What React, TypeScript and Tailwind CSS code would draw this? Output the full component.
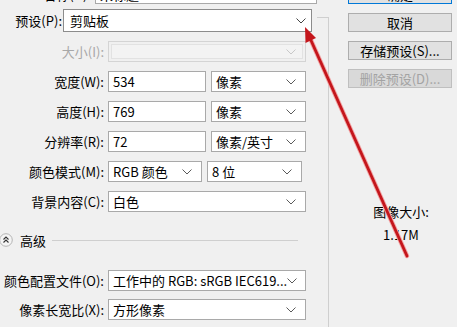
import React from 'react';

const font = { fontFamily: '"Noto Sans CJK SC", "Noto Sans", sans-serif' };

function Chevron({ color = '#5a5a5a' }: { color?: string }) {
    return (
        <svg width="10" height="6" viewBox="0 0 10 6" className="shrink-0">
            <path d="M0.5 0.5 L5 5 L9.5 0.5" fill="none" stroke={color} strokeWidth="1" />
        </svg>
    );
}

interface BoxProps {
    value?: string;
    width: string;
    select?: boolean;
    height?: string;
}

function Box({ value = '', width, select, height = 'h-[21px]' }: BoxProps) {
    return (
        <div className={`${width} ${height} shrink-0 flex items-center justify-between bg-white border border-[#a9a9a9] pl-[4px] pr-[9px]`}>
            <span className="text-[13px] leading-none text-black whitespace-nowrap">{value}</span>
            {select && <Chevron />}
        </div>
    );
}

function Row({ label, children, disabled }: { label: string; children: React.ReactNode; disabled?: boolean }) {
    return (
        <div className="flex items-center h-[21px] shrink-0">
            <div className={`w-[104px] text-right text-[13px] leading-none whitespace-nowrap ${disabled ? 'text-[#a8a8a8]' : 'text-black'}`}>
                {label}
            </div>
            <div className="flex items-center gap-[5px] ml-[4px]">{children}</div>
        </div>
    );
}

function Button({ label, disabled, primary }: { label: string; disabled?: boolean; primary?: boolean }) {
    return (
        <div
            className={`h-[19px] w-[104px] flex items-center justify-center text-[13px] leading-none border ${
                primary
                    ? 'border-[#0078d7] bg-[#e1e1e1] text-black'
                    : disabled
                    ? 'border-[#bfbfbf] bg-[#d9d9d9] text-[#a3a3a3]'
                    : 'border-[#adadad] bg-[#e1e1e1] text-black'
            }`}
        >
            {label}
        </div>
    );
}

export default function App() {
    return (
        <div className="relative w-[457px] h-[327px] overflow-hidden bg-[#f0f0f0] flex" style={font}>
            {/* Left form */}
            <div className="w-[317px] shrink-0 flex flex-col">
                {/* 名称 (cut off) */}
                <div className="flex items-center h-[20px] -mt-[16px] shrink-0">
                    <div className="w-[104px] text-right text-[13px] leading-none">名称(N):</div>
                    <div className="ml-[4px]">
                        <Box value="未标题-1" width="w-[222px]" height="h-[20px]" />
                    </div>
                </div>

                {/* 预设 */}
                <div className="flex items-center h-[23px] mt-[5px] shrink-0">
                    <div className="w-[62px] text-right text-[13px] leading-none">预设(P):</div>
                    <div className="ml-[1px] w-[249px] h-[23px] flex items-center justify-between bg-white border border-[#8c8c8c] pl-[6px] pr-[5px]">
                        <span className="text-[13px] leading-none">剪贴板</span>
                        <Chevron color="#444" />
                    </div>
                </div>

                <div className="flex flex-col gap-[9px] mt-[9px]">
                    <Row label="大小(I):" disabled>
                        <div className="w-[198px] h-[21px] border border-[#d4d4d4] p-[2px]">
                            <div className="w-full h-full border border-[#e2e2e2] bg-[#f3f3f3] flex items-center justify-end pr-[6px]">
                                <Chevron color="#c8c8c8" />
                            </div>
                        </div>
                    </Row>
                    <Row label="宽度(W):">
                        <Box value="534" width="w-[98px]" />
                        <Box value="像素" width="w-[95px]" select />
                    </Row>
                    <Row label="高度(H):">
                        <Box value="769" width="w-[98px]" />
                        <Box value="像素" width="w-[95px]" select />
                    </Row>
                    <Row label="分辨率(R):">
                        <Box value="72" width="w-[98px]" />
                        <Box value="像素/英寸" width="w-[95px]" select />
                    </Row>
                    <Row label="颜色模式(M):">
                        <Box value="RGB 颜色" width="w-[94px]" select />
                        <Box value="8 位" width="w-[95px]" select />
                    </Row>
                    <Row label="背景内容(C):">
                        <Box value="白色" width="w-[198px]" select />
                    </Row>
                </div>

                {/* 高级 */}
                <div className="flex items-center h-[16px] mt-[20px] -ml-[1px] shrink-0">
                    <svg width="14" height="14" viewBox="0 0 14 14" className="shrink-0">
                        <circle cx="7" cy="7" r="6.3" fill="#f4f4f4" stroke="#b4b4b4" />
                        <path d="M4.5 6.5 L7 4 L9.5 6.5 M4.5 9.5 L7 7 L9.5 9.5" fill="none" stroke="#333" strokeWidth="1.1" />
                    </svg>
                    <span className="ml-[7px] text-[13px] leading-none">高级</span>
                    <div className="ml-[6px] w-[246px] h-px bg-[#cfcfcf]" />
                </div>

                <div className="flex flex-col gap-[8px] mt-[22px]">
                    <Row label="颜色配置文件(O):">
                        <Box value="工作中的 RGB: sRGB IEC619..." width="w-[198px]" select />
                    </Row>
                    <Row label="像素长宽比(X):">
                        <Box value="方形像素" width="w-[198px]" select />
                    </Row>
                </div>
            </div>

            {/* group frame corner */}
            <div className="w-[12px] shrink-0 mt-[17px] border-t border-r border-[#cfcfcf]" />

            {/* Right column */}
            <div className="flex flex-col pl-[19px]">
                <div className="flex flex-col gap-[9px] -mt-[15px]">
                    <Button label="确定" primary />
                    <div className="flex flex-col gap-[9px]">
                        <Button label="取消" />
                        <Button label="存储预设(S)..." />
                        <Button label="删除预设(D)..." disabled />
                    </div>
                </div>
                <div className="w-[104px] mt-[117px] flex flex-col items-center gap-[10px] text-[13px] leading-none">
                    <span className="ml-[2px]">图像大小:</span>
                    <span className="ml-[2px]">1.17M</span>
                </div>
            </div>

            {/* red annotation arrow */}
            <svg className="absolute inset-0 pointer-events-none" width="457" height="327" viewBox="0 0 457 327">
                <line x1="407" y1="256" x2="309.5" y2="37" stroke="#f2a3a3" strokeWidth="4.5" strokeLinecap="round" />
                <line x1="407" y1="256" x2="309.5" y2="37" stroke="#c4161c" strokeWidth="2.8" strokeLinecap="round" />
                <polygon points="305,27 316,38 305.5,43" fill="#c4161c" />
            </svg>
        </div>
    );
}
